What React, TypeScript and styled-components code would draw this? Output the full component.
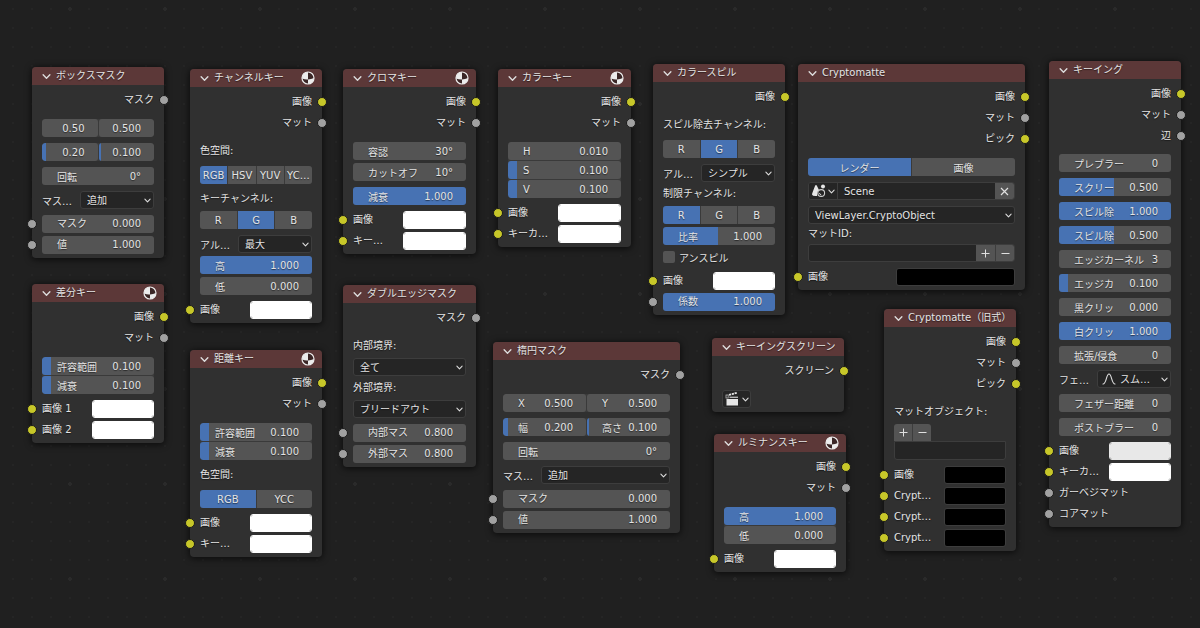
import React from "react";
import styled, { createGlobalStyle, css } from "styled-components";

const color = {
  canvas: "#202020",
  node: "#303030",
  header: "#5c3838",
  field: "#545454",
  accent: "#4772b3",
  well: "#252525",
  outline: "#3d3d3d",
  text: "#e4e4e4",
  yellow: "#c7c729",
  gray: "#a1a1a1",
};

const GlobalStyle = createGlobalStyle`
  * { box-sizing: border-box; }
  body { margin: 0; background: ${color.canvas}; }
  body, input, button, select {
    font-family: "DejaVu Sans", "Noto Sans CJK JP", sans-serif;
    font-size: 10px;
    color: ${color.text};
  }
  svg { flex: none; }
`;

const Canvas = styled.main`
  position: relative;
  min-height: 100vh;
  overflow: hidden;
  background-color: ${color.canvas};
  background-image:
    radial-gradient(circle at 2px 2px, #2a2a2a 2px, transparent 2px),
    radial-gradient(circle at 1px 1px, #252525 1px, transparent 1px);
  background-size: 95px 95px, 19px 19px;
  background-position: 68px 7px, 69px 8px;
`;

const NodeBox = styled.section<{ $x: number; $y: number; $w: number }>`
  position: absolute;
  left: ${(p) => p.$x}px;
  top: ${(p) => p.$y}px;
  width: ${(p) => p.$w}px;
  border-radius: 4px;
  background: ${color.node};
  box-shadow: 0 1px 6px 1px rgba(0, 0, 0, 0.6);
  text-shadow: 0 1px 1px rgba(0, 0, 0, 0.5);
`;

const Header = styled.header`
  display: flex;
  align-items: center;
  gap: 5px;
  height: 18px;
  padding: 0 7px 0 10px;
  border-radius: 4px 4px 0 0;
  background: ${color.header};
`;

const Title = styled.h2`
  flex: 1;
  min-width: 0;
  margin: 0;
  font-size: 10px;
  font-weight: 400;
  line-height: 18px;
  white-space: nowrap;
`;

const Outputs = styled.div`
  padding-top: 4px;
`;

const Inputs = styled.div`
  padding-bottom: 3px;
`;

const SocketRow = styled.div<{ $out?: boolean }>`
  position: relative;
  display: flex;
  align-items: center;
  justify-content: ${(p) => (p.$out ? "flex-end" : "space-between")};
  height: 21px;
  padding: 0 10px;
  line-height: 18px;
  white-space: nowrap;
`;

const Dot = styled.span<{ $tone: Tone; $out?: boolean }>`
  position: absolute;
  top: 6px;
  ${(p) => (p.$out ? "right: -5px;" : "left: -5px;")}
  width: 10px;
  height: 10px;
  border: 1px solid #1b1b1b;
  border-radius: 50%;
  background: ${(p) => color[p.$tone]};
`;

const Swatch = styled.input<{ $edge: string }>`
  appearance: none;
  width: calc(60% - 5px);
  height: 18px;
  padding: 0;
  border: 1px solid ${(p) => p.$edge};
  border-radius: 3px;
  background: none;
  overflow: hidden;
  &::-webkit-color-swatch-wrapper { padding: 0; }
  &::-webkit-color-swatch { border: 0; }
`;

const Props = styled.div<{ $lead?: number }>`
  display: flex;
  flex-direction: column;
  gap: 6px;
  padding: ${(p) => p.$lead ?? 9}px 10px 4px;
`;

const Group = styled.div`
  display: flex;
  flex-direction: column;
  gap: 3px;
`;

const Joined = styled.div<{ $row?: boolean }>`
  display: flex;
  flex-direction: ${(p) => (p.$row ? "row" : "column")};
  gap: 1px;
  border-radius: 3px;
  overflow: hidden;
  background: #3a3a3a;
  & > * { border-radius: 0; }
  & > label { ${(p) => (p.$row ? "flex: 1 1 0; min-width: 0;" : "")} }
`;

const Field = styled.label<{ $fill: number; $bare: boolean }>`
  display: flex;
  align-items: center;
  height: 18px;
  padding: 0 13px 0 ${(p) => (p.$bare ? 5 : 15)}px;
  border-radius: 3px;
  white-space: nowrap;
  background: linear-gradient(
    to right,
    ${color.accent} ${(p) => p.$fill}%,
    ${color.field} ${(p) => p.$fill}%
  );
`;

const Value = styled.input`
  flex: 1 1 0;
  min-width: 0;
  height: 18px;
  padding: 0;
  border: 0;
  outline: 0;
  background: none;
  text-align: right;
  text-shadow: inherit;
`;

const Caption = styled.div<{ $short?: boolean }>`
  height: ${(p) => (p.$short ? 14 : 18)}px;
  line-height: ${(p) => (p.$short ? 14 : 18)}px;
  white-space: nowrap;
`;

const Segments = styled.div`
  display: flex;
  gap: 1px;
  height: 18px;
  border-radius: 3px;
  overflow: hidden;
  background: #3a3a3a;
`;

const Segment = styled.button<{ $on?: boolean }>`
  flex: 1 1 0;
  min-width: 0;
  padding: 0;
  border: 0;
  background: ${(p) => (p.$on ? color.accent : color.field)};
  text-shadow: inherit;
  white-space: nowrap;
`;

const well = css`
  border: 1px solid ${color.outline};
  border-radius: 3px;
  background: ${color.well};
`;

const SelectRow = styled.label`
  display: flex;
  align-items: center;
  height: 18px;
  white-space: nowrap;
`;

const SelectName = styled.span`
  flex: none;
  width: 38px;
`;

const SelectWell = styled.span`
  ${well}
  display: flex;
  flex: 1 1 0;
  align-items: center;
  gap: 2px;
  min-width: 0;
  height: 18px;
  padding: 0 2px 0 4px;
`;

const Select = styled.select`
  appearance: none;
  flex: 1 1 0;
  min-width: 0;
  height: 16px;
  padding: 0 0 0 2px;
  border: 0;
  outline: 0;
  background: none;
  text-shadow: inherit;
`;

const CheckRow = styled.label`
  display: flex;
  align-items: center;
  gap: 4px;
  height: 18px;
`;

const Check = styled.input`
  appearance: none;
  width: 12px;
  height: 12px;
  margin: 0;
  border-radius: 2px;
  background: ${color.field};
`;

const Bar = styled.div`
  ${well}
  display: flex;
  height: 18px;
  overflow: hidden;
`;

const BarInput = styled.input`
  flex: 1 1 0;
  min-width: 0;
  padding: 0 6px;
  border: 0;
  outline: 0;
  background: none;
  text-shadow: inherit;
`;

const BarButton = styled.button<{ $w: number; $dark?: boolean }>`
  display: flex;
  align-items: center;
  justify-content: center;
  gap: 2px;
  width: ${(p) => p.$w}px;
  padding: 0;
  border: 0;
  background: ${(p) => (p.$dark ? color.well : color.field)};
  & + & { border-left: 1px solid ${color.outline}; }
`;

const PickerDivider = styled.span`
  width: 1px;
  background: ${color.outline};
`;

const ClipButton = styled.button`
  ${well}
  display: flex;
  align-items: center;
  justify-content: center;
  gap: 3px;
  width: 29px;
  height: 18px;
  padding: 0;
`;

const ListTabs = styled.div`
  display: flex;
  width: 37px;
  height: 17px;
  border-radius: 3px 3px 0 0;
  overflow: hidden;
`;

const ListWell = styled.div`
  ${well}
  height: 19px;
  border-radius: 0 0 3px 3px;
`;

const FullField = styled.div`
  flex: 1 1 0;
  min-width: 0;
`;

type Tone = "yellow" | "gray";

const Chevron = ({ size = 7 }: { size?: number }) => (
  <svg width={size} height={size} viewBox="0 0 8 8" fill="none" stroke="#dedede" strokeWidth="1.2" strokeLinecap="round" strokeLinejoin="round">
    <path d="M1 2.4 4 5.6 7 2.4" />
  </svg>
);

const SphereIcon = () => (
  <svg width="14" height="14" viewBox="0 0 14 14">
    <circle cx="7" cy="7" r="6" fill="#3a2626" stroke="#ececec" strokeWidth="1.2" />
    <path d="M7 1A6 6 0 0 0 1 7.4Q4 8.6 7 8.4Z" fill="#ececec" />
    <path d="M7 8.4Q10 8.4 13 7A6 6 0 0 1 7 13Z" fill="#ececec" />
  </svg>
);

const SceneIcon = () => (
  <svg width="15" height="14" viewBox="0 0 15 14">
    <path d="M5 1Q5.600 1 6 2L8 6Q6 7.500 6 10.500L6.200 12Q1.500 12.500 1 10.500Q1 9.500 4 2Q4.400 1 5 1Z" fill="#e6e6e6" />
    <circle cx="12" cy="2.600" r="2" fill="#e6e6e6" />
    <circle cx="10.200" cy="9" r="3.400" fill="none" stroke="#cfcfcf" strokeWidth="1.100" />
    <path d="M8.500 9A1.800 1.800 0 0 0 10.200 10.800" fill="none" stroke="#cfcfcf" strokeWidth="1" />
  </svg>
);

const ClapperIcon = () => (
  <svg width="14" height="14" viewBox="0 0 14 14">
    <rect x="1.500" y="7" width="11.500" height="6.500" fill="#e6e6e6" />
    <rect x="4.500" y="4.600" width="8.500" height="1.400" fill="#b4b4b4" />
    <rect x="1" y="3" width="2.200" height="3" fill="none" stroke="#b4b4b4" strokeWidth="0.800" />
    <path d="M4 2.900 12 0.800" stroke="#e6e6e6" strokeWidth="1.700" strokeDasharray="2.200 0.700" />
  </svg>
);

const CurveIcon = () => (
  <svg width="14" height="12" viewBox="0 0 14 12" fill="none" stroke="#e0e0e0" strokeWidth="1.100" strokeLinecap="round">
    <path d="M1 11C4.500 11 4.200 1 7 1S9.500 11 13 11" />
  </svg>
);

const PlusIcon = () => (
  <svg width="9" height="9" viewBox="0 0 9 9" stroke="#e0e0e0">
    <path d="M4.500 0.500V8.500M0.500 4.500H8.500" />
  </svg>
);

const MinusIcon = () => (
  <svg width="9" height="9" viewBox="0 0 9 9" stroke="#e0e0e0">
    <path d="M0.500 4.500H8.500" />
  </svg>
);

const CloseIcon = () => (
  <svg width="9" height="9" viewBox="0 0 9 9" stroke="#e0e0e0" strokeWidth="1.200">
    <path d="M1 1 8 8M8 1 1 8" />
  </svg>
);

interface NodeProps {
  x: number;
  y: number;
  w?: number;
  title: string;
  sphere?: boolean;
  outputs: [string, Tone][];
  children?: React.ReactNode;
}

const Node = ({ x, y, w = 132, title, sphere, outputs, children }: NodeProps) => (
  <NodeBox $x={x} $y={y} $w={w}>
    <Header>
      <Chevron size={9} />
      <Title>{title}</Title>
      {sphere && <SphereIcon />}
    </Header>
    <Outputs>
      {outputs.map(([name, tone]) => (
        <SocketRow key={name} $out>
          <span>{name}</span>
          <Dot $tone={tone} $out />
        </SocketRow>
      ))}
    </Outputs>
    {children}
  </NodeBox>
);

interface NumProps {
  name?: string;
  value: string;
  fill?: number;
  hint?: string;
}

const Num = ({ name, value, fill = 0, hint }: NumProps) => (
  <Field $fill={fill} $bare={!name}>
    {name && <span>{name}</span>}
    <Value defaultValue={value} aria-label={hint} />
  </Field>
);

const NumSocket = (p: NumProps) => (
  <SocketRow>
    <Dot $tone="gray" />
    <FullField>
      <Num {...p} />
    </FullField>
  </SocketRow>
);

const ColorSocket = ({ name, value = "#ffffff" }: { name: string; value?: string }) => {
  const id = React.useId();
  return (
    <SocketRow>
      <Dot $tone="yellow" />
      <label htmlFor={id}>{name}</label>
      <Swatch id={id} type="color" defaultValue={value} $edge={value === "#000000" ? color.outline : value} />
    </SocketRow>
  );
};

const PlainSocket = ({ name }: { name: string }) => (
  <SocketRow>
    <Dot $tone="gray" />
    <span>{name}</span>
  </SocketRow>
);

const Choice = ({ items, on }: { items: string[]; on: number }) => (
  <Segments>
    {items.map((t, i) => (
      <Segment key={t} type="button" $on={i === on} aria-pressed={i === on}>
        {t}
      </Segment>
    ))}
  </Segments>
);

const Menu = ({ name, value, icon, hint }: { name?: string; value: string; icon?: React.ReactNode; hint?: string }) => (
  <SelectRow>
    {name && <SelectName>{name}</SelectName>}
    <SelectWell>
      {icon}
      <Select aria-label={hint}>
        <option>{value}</option>
      </Select>
      <Chevron />
    </SelectWell>
  </SelectRow>
);

const IMAGE: [string, Tone] = ["画像", "yellow"];
const MATTE: [string, Tone] = ["マット", "gray"];
const MASK: [string, Tone] = ["マスク", "gray"];
const PICK: [string, Tone] = ["ピック", "yellow"];

export default function App() {
  return (
    <>
      <GlobalStyle />
      <Canvas lang="ja">
        <Node x={32} y={67} title="ボックスマスク" outputs={[MASK]}>
          <Props>
            <Joined $row>
              <Num value="0.50" hint="X" />
              <Num value="0.500" hint="Y" />
            </Joined>
            <Joined $row>
              <Num value="0.20" fill={8} hint="幅" />
              <Num value="0.100" fill={3} hint="高さ" />
            </Joined>
            <Num name="回転" value="0°" />
            <Menu name="マス…" value="追加" />
          </Props>
          <Inputs>
            <NumSocket name="マスク" value="0.000" />
            <NumSocket name="値" value="1.000" />
          </Inputs>
        </Node>

        <Node x={190} y={69} title="チャンネルキー" sphere outputs={[IMAGE, MATTE]}>
          <Props>
            <Caption>色空間:</Caption>
            <Choice items={["RGB", "HSV", "YUV", "YC…"]} on={0} />
            <Group>
              <Caption>キーチャンネル:</Caption>
              <Choice items={["R", "G", "B"]} on={1} />
            </Group>
            <Group>
              <Menu name="アル…" value="最大" />
              <Num name="高" value="1.000" fill={100} />
              <Num name="低" value="0.000" />
            </Group>
          </Props>
          <Inputs>
            <ColorSocket name="画像" />
          </Inputs>
        </Node>

        <Node x={343} y={69} w={133} title="クロマキー" sphere outputs={[IMAGE, MATTE]}>
          <Props>
            <Group>
              <Num name="容認" value="30°" />
              <Num name="カットオフ" value="10°" />
            </Group>
            <Num name="減衰" value="1.000" fill={100} />
          </Props>
          <Inputs>
            <ColorSocket name="画像" />
            <ColorSocket name="キー…" />
          </Inputs>
        </Node>

        <Node x={498} y={69} w={133} title="カラーキー" sphere outputs={[IMAGE, MATTE]}>
          <Props>
            <Joined>
              <Num name="H" value="0.010" />
              <Num name="S" value="0.100" fill={8} />
              <Num name="V" value="0.100" fill={8} />
            </Joined>
          </Props>
          <Inputs>
            <ColorSocket name="画像" />
            <ColorSocket name="キーカ…" />
          </Inputs>
        </Node>

        <Node x={653} y={64} title="カラースピル" outputs={[IMAGE]}>
          <Props>
            <Caption>スピル除去チャンネル:</Caption>
            <Choice items={["R", "G", "B"]} on={1} />
            <Group>
              <Menu name="アル…" value="シンプル" />
              <Caption>制限チャンネル:</Caption>
              <Choice items={["R", "G", "B"]} on={0} />
              <Num name="比率" value="1.000" fill={49} />
              <CheckRow>
                <Check type="checkbox" />
                アンスピル
              </CheckRow>
            </Group>
          </Props>
          <Inputs>
            <ColorSocket name="画像" />
            <NumSocket name="係数" value="1.000" fill={100} />
          </Inputs>
        </Node>

        <Node x={798} y={64} w={227} title="Cryptomatte" outputs={[IMAGE, MATTE, PICK]}>
          <Props>
            <Choice items={["レンダー", "画像"]} on={0} />
            <Bar>
              <BarButton type="button" $w={28} $dark aria-label="シーンを選択">
                <SceneIcon />
                <Chevron />
              </BarButton>
              <PickerDivider />
              <BarInput defaultValue="Scene" aria-label="シーン" />
              <BarButton type="button" $w={19} aria-label="リンク解除">
                <CloseIcon />
              </BarButton>
            </Bar>
            <Group>
              <Menu value="ViewLayer.CryptoObject" hint="レイヤー" />
              <Caption $short>マットID:</Caption>
              <Bar>
                <BarInput aria-label="マットID" />
                <BarButton type="button" $w={19} aria-label="追加">
                  <PlusIcon />
                </BarButton>
                <BarButton type="button" $w={19} aria-label="削除">
                  <MinusIcon />
                </BarButton>
              </Bar>
            </Group>
          </Props>
          <Inputs>
            <ColorSocket name="画像" value="#000000" />
          </Inputs>
        </Node>

        <Node x={1049} y={61} title="キーイング" outputs={[IMAGE, MATTE, ["辺", "gray"]]}>
          <Props $lead={8}>
            <Num name="プレブラー" value="0" />
            <Num name="スクリー" value="0.500" fill={49} />
            <Num name="スピル除" value="1.000" fill={100} />
            <Num name="スピル除" value="0.500" fill={49} />
            <Num name="エッジカーネル" value="3" />
            <Num name="エッジカ" value="0.100" fill={8} />
            <Num name="黒クリッ" value="0.000" />
            <Num name="白クリッ" value="1.000" fill={100} />
            <Num name="拡張/侵食" value="0" />
            <Menu name="フェ…" value="スム…" icon={<CurveIcon />} />
            <Num name="フェザー距離" value="0" />
            <Num name="ポストブラー" value="0" />
          </Props>
          <Inputs>
            <ColorSocket name="画像" value="#e8e8e8" />
            <ColorSocket name="キーカ…" />
            <PlainSocket name="ガーベジマット" />
            <PlainSocket name="コアマット" />
          </Inputs>
        </Node>

        <Node x={32} y={284} title="差分キー" sphere outputs={[IMAGE, MATTE]}>
          <Props>
            <Joined>
              <Num name="許容範囲" value="0.100" fill={8} />
              <Num name="減衰" value="0.100" fill={8} />
            </Joined>
          </Props>
          <Inputs>
            <ColorSocket name="画像 1" />
            <ColorSocket name="画像 2" />
          </Inputs>
        </Node>

        <Node x={190} y={350} title="距離キー" sphere outputs={[IMAGE, MATTE]}>
          <Props>
            <Joined>
              <Num name="許容範囲" value="0.100" fill={8} />
              <Num name="減衰" value="0.100" fill={8} />
            </Joined>
            <Caption>色空間:</Caption>
            <Choice items={["RGB", "YCC"]} on={0} />
          </Props>
          <Inputs>
            <ColorSocket name="画像" />
            <ColorSocket name="キー…" />
          </Inputs>
        </Node>

        <Node x={343} y={285} w={133} title="ダブルエッジマスク" outputs={[MASK]}>
          <Props>
            <Group>
              <Caption>内部境界:</Caption>
              <Menu value="全て" hint="内部境界" />
              <Caption>外部境界:</Caption>
              <Menu value="ブリードアウト" hint="外部境界" />
            </Group>
          </Props>
          <Inputs>
            <NumSocket name="内部マス" value="0.800" />
            <NumSocket name="外部マス" value="0.800" />
          </Inputs>
        </Node>

        <Node x={493} y={342} w={187} title="楕円マスク" outputs={[MASK]}>
          <Props>
            <Joined $row>
              <Num name="X" value="0.500" />
              <Num name="Y" value="0.500" />
            </Joined>
            <Joined $row>
              <Num name="幅" value="0.200" fill={6} />
              <Num name="高さ" value="0.100" fill={3} />
            </Joined>
            <Num name="回転" value="0°" />
            <Menu name="マス…" value="追加" />
          </Props>
          <Inputs>
            <NumSocket name="マスク" value="0.000" />
            <NumSocket name="値" value="1.000" />
          </Inputs>
        </Node>

        <Node x={712} y={338} title="キーイングスクリーン" outputs={[["スクリーン", "yellow"]]}>
          <Props>
            <ClipButton type="button" aria-label="動画クリップ">
              <ClapperIcon />
              <Chevron />
            </ClipButton>
          </Props>
        </Node>

        <Node x={714} y={434} title="ルミナンスキー" sphere outputs={[IMAGE, MATTE]}>
          <Props>
            <Joined>
              <Num name="高" value="1.000" fill={100} />
              <Num name="低" value="0.000" />
            </Joined>
          </Props>
          <Inputs>
            <ColorSocket name="画像" />
          </Inputs>
        </Node>

        <Node x={884} y={309} title="Cryptomatte（旧式）" outputs={[IMAGE, MATTE, PICK]}>
          <Props>
            <Group>
              <Caption>マットオブジェクト:</Caption>
              <div>
                <ListTabs>
                  <BarButton type="button" $w={18} aria-label="追加">
                    <PlusIcon />
                  </BarButton>
                  <BarButton type="button" $w={19} aria-label="削除">
                    <MinusIcon />
                  </BarButton>
                </ListTabs>
                <ListWell />
              </div>
            </Group>
          </Props>
          <Inputs>
            <ColorSocket name="画像" value="#000000" />
            <ColorSocket name="Crypt…" value="#000000" />
            <ColorSocket name="Crypt…" value="#000000" />
            <ColorSocket name="Crypt…" value="#000000" />
          </Inputs>
        </Node>
      </Canvas>
    </>
  );
}
